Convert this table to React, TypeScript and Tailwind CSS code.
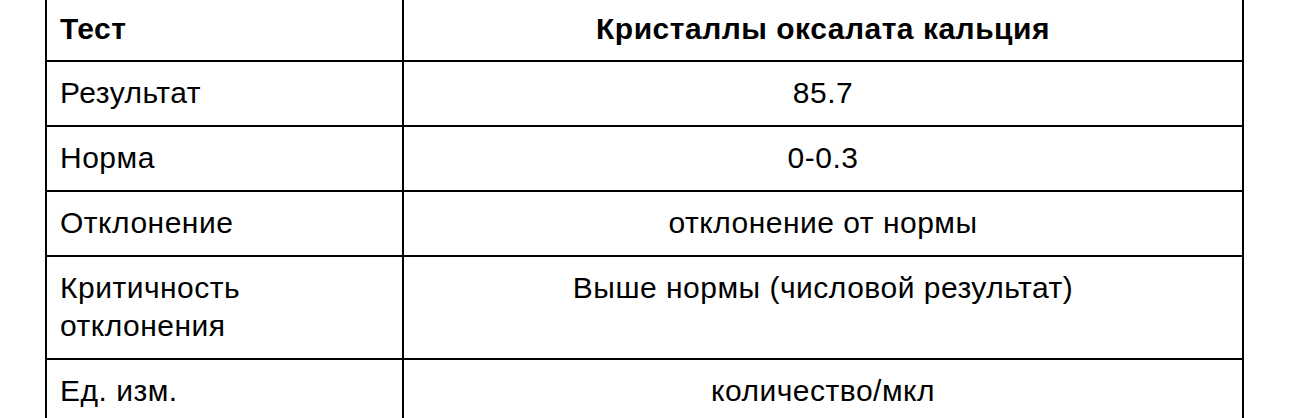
import React from "react";

const rows: { label: string[]; value: string }[] = [
  { label: ["Результат"], value: "85.7" },
  { label: ["Норма"], value: "0-0.3" },
  { label: ["Отклонение"], value: "отклонение от нормы" },
  { label: ["Критичность", "отклонения"], value: "Выше нормы (числовой результат)" },
  { label: ["Ед. изм."], value: "количество/мкл" },
];

export default function App() {
  return (
    <div
      className="w-[1290px] h-[418px] overflow-hidden bg-white text-black"
      style={{ fontFamily: '"Liberation Sans", Arial, sans-serif' }}
    >
      <div className="ml-[45px] w-[1199px] border-x-2 border-black">
        <div className="flex border-b-2 border-black">
          <div className="w-[357px] shrink-0 border-r-2 border-black pl-[13px] pt-[10px] h-[60px] text-[30px] leading-[38px] tracking-[0.5px] font-bold">
            Тест
          </div>
          <div className="flex-1 text-center pt-[10px] h-[60px] text-[30px] leading-[38px] tracking-[0.5px] font-bold">
            Кристаллы оксалата кальция
          </div>
        </div>
        {rows.map((r, i) => (
          <div
            key={i}
            className={
              i < rows.length - 1 ? "flex border-b-2 border-black" : "flex"
            }
          >
            <div className="w-[357px] shrink-0 border-r-2 border-black pl-[13px] pt-[12px] pb-[13px] text-[30px] leading-[38px] tracking-[0.5px]">
              {r.label.map((l, j) => (
                <div key={j}>{l}</div>
              ))}
            </div>
            <div className="flex-1 text-center pt-[12px] pb-[13px] text-[30px] leading-[38px] tracking-[0.5px]">
              {r.value}
            </div>
          </div>
        ))}
      </div>
    </div>
  );
}
